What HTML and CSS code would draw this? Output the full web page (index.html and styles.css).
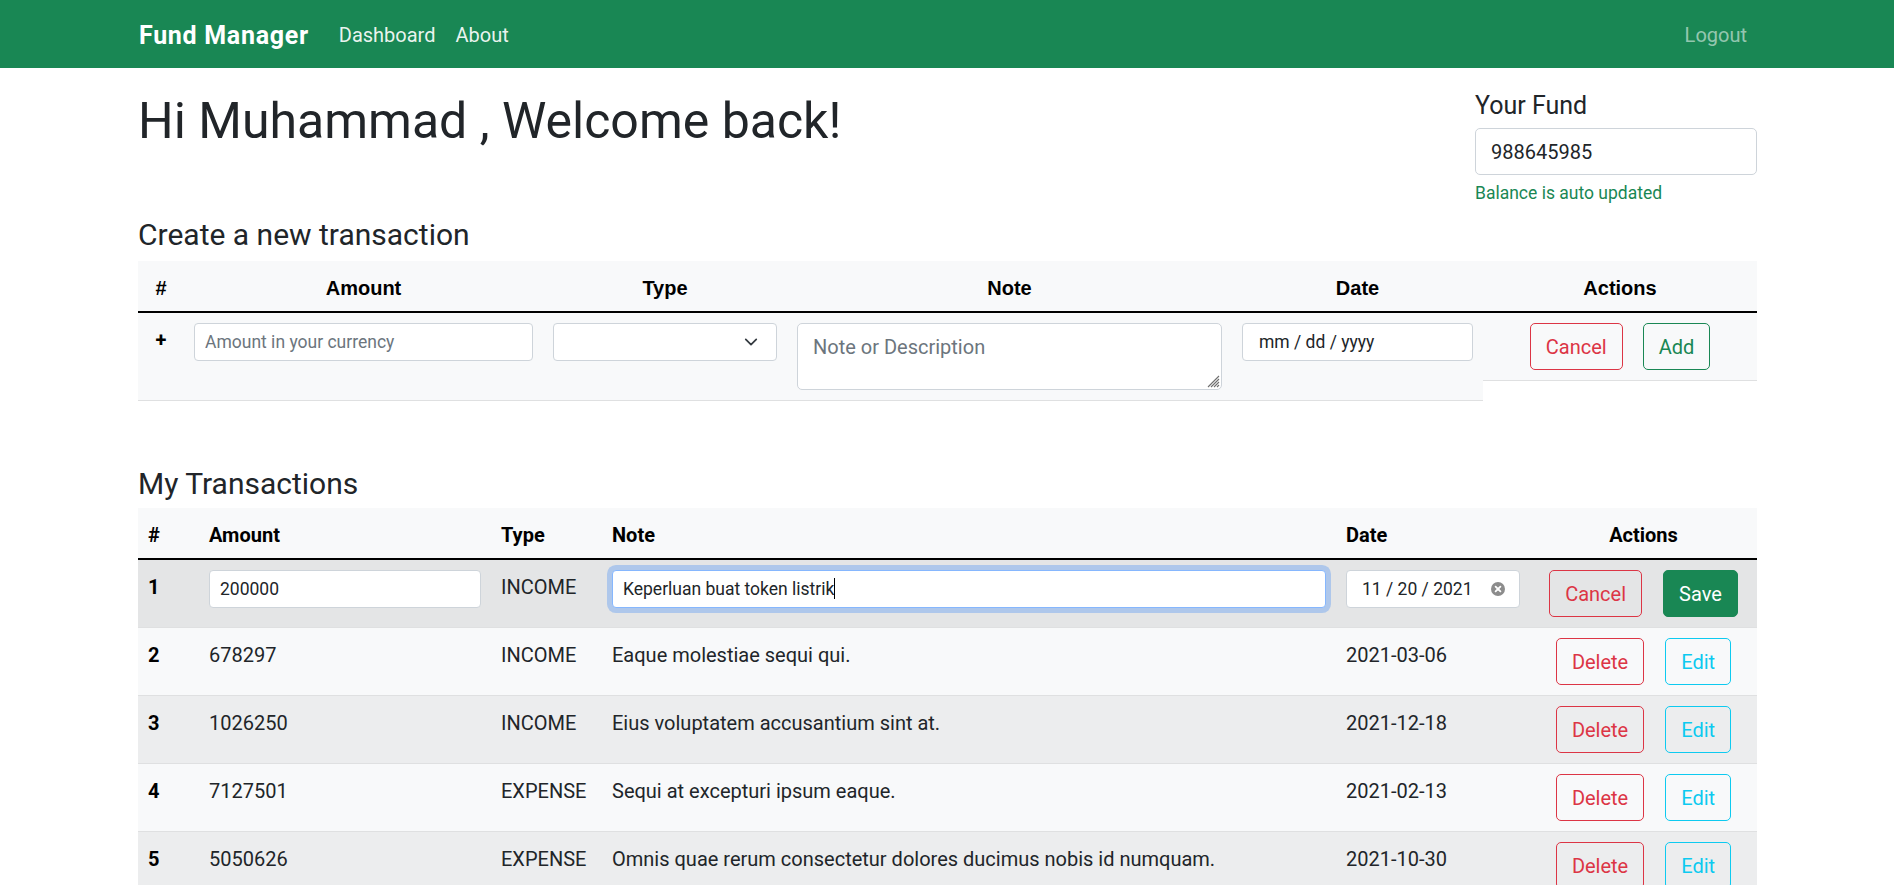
FILE: index.html
```html
<!DOCTYPE html>
<html lang="en">
<head>
<meta charset="utf-8">
<title>Fund Manager</title>
<link rel="stylesheet" href="styles.css">
</head>
<body>
<nav class="navbar">
  <div class="container nav-inner">
    <a class="brand" href="#">Fund Manager</a>
    <ul class="nav-links">
      <li><a class="nav-link" href="#">Dashboard</a></li>
      <li><a class="nav-link" href="#">About</a></li>
    </ul>
    <a class="nav-link logout" href="#">Logout</a>
  </div>
</nav>

<main class="container page">
  <section class="top-row">
    <h1 class="welcome">Hi Muhammad , Welcome back!</h1>
    <div class="fund">
      <label class="fund-label" for="fund">Your Fund</label>
      <input id="fund" class="form-control" type="text" value="988645985">
      <div class="form-text">Balance is auto updated</div>
    </div>
  </section>

  <h4 class="section-title create-title">Create a new transaction</h4>
  <table class="table create-table">
    <colgroup>
      <col class="c1-num"><col class="c1-amount"><col class="c1-type"><col class="c1-note"><col class="c1-date"><col class="c1-actions">
    </colgroup>
    <thead>
      <tr><th>#</th><th>Amount</th><th>Type</th><th>Note</th><th>Date</th><th>Actions</th></tr>
    </thead>
    <tbody>
      <tr>
        <th class="row-head">+</th>
        <td><input class="form-control form-control-sm" type="text" placeholder="Amount in your currency"></td>
        <td>
          <div class="form-control form-control-sm form-select">
            <svg class="chev" viewBox="0 0 16 16" width="18" height="14"><path d="M2 5l6 6 6-6" fill="none" stroke="#343a40" stroke-width="2" stroke-linecap="round" stroke-linejoin="round"/></svg>
          </div>
        </td>
        <td>
          <div class="textarea-wrap">
            <textarea class="form-control note-area" placeholder="Note or Description"></textarea>
            <svg class="grip" viewBox="0 0 14 14" width="14" height="14"><path d="M13 2L2 13M13 5L5 13M13 8L8 13M13 11L11 13" stroke="#6f6f6f" stroke-width="1.1" fill="none"/></svg>
          </div>
        </td>
        <td><input class="form-control form-control-sm date-input" type="text" placeholder="mm / dd / yyyy"></td>
        <td class="actions-cell">
          <div class="actions-box">
            <button class="btn btn-outline-danger">Cancel</button>
            <button class="btn btn-outline-success">Add</button>
          </div>
        </td>
      </tr>
    </tbody>
  </table>

  <h4 class="section-title tx-title">My Transactions</h4>
  <table class="table tx-table">
    <colgroup>
      <col class="c2-num"><col class="c2-amount"><col class="c2-type"><col class="c2-note"><col class="c2-date"><col class="c2-actions">
    </colgroup>
    <thead>
      <tr><th>#</th><th>Amount</th><th>Type</th><th>Note</th><th>Date</th><th class="center">Actions</th></tr>
    </thead>
    <tbody>
      <tr class="active">
        <th class="row-head">1</th>
        <td><input class="form-control form-control-sm" type="text" value="200000"></td>
        <td>INCOME</td>
        <td><div class="form-control form-control-sm focused">Keperluan buat token listrik<span class="caret"></span></div></td>
        <td>
          <div class="form-control form-control-sm date-filled">
            <span>11 / 20 / 2021</span>
            <svg class="clear" viewBox="0 0 16 16" width="16" height="16"><circle cx="8" cy="8" r="7" fill="#8c8c8c"/><path d="M5.6 5.6l4.8 4.8M10.4 5.6l-4.8 4.8" stroke="#fff" stroke-width="1.8" stroke-linecap="round"/></svg>
          </div>
        </td>
        <td><div class="btn-row"><button class="btn btn-outline-danger">Cancel</button><button class="btn btn-success">Save</button></div></td>
      </tr>
      <tr>
        <th class="row-head">2</th>
        <td>678297</td>
        <td>INCOME</td>
        <td>Eaque molestiae sequi qui.</td>
        <td>2021-03-06</td>
        <td><div class="btn-row"><button class="btn btn-outline-danger">Delete</button><button class="btn btn-outline-info">Edit</button></div></td>
      </tr>
      <tr>
        <th class="row-head">3</th>
        <td>1026250</td>
        <td>INCOME</td>
        <td>Eius voluptatem accusantium sint at.</td>
        <td>2021-12-18</td>
        <td><div class="btn-row"><button class="btn btn-outline-danger">Delete</button><button class="btn btn-outline-info">Edit</button></div></td>
      </tr>
      <tr>
        <th class="row-head">4</th>
        <td>7127501</td>
        <td>EXPENSE</td>
        <td>Sequi at excepturi ipsum eaque.</td>
        <td>2021-02-13</td>
        <td><div class="btn-row"><button class="btn btn-outline-danger">Delete</button><button class="btn btn-outline-info">Edit</button></div></td>
      </tr>
      <tr>
        <th class="row-head">5</th>
        <td>5050626</td>
        <td>EXPENSE</td>
        <td>Omnis quae rerum consectetur dolores ducimus nobis id numquam.</td>
        <td>2021-10-30</td>
        <td><div class="btn-row"><button class="btn btn-outline-danger">Delete</button><button class="btn btn-outline-info">Edit</button></div></td>
      </tr>
    </tbody>
  </table>
</main>
</body>
</html>
```

FILE: styles.css
```css
html { font-size: 20px; }
* { box-sizing: border-box; }
body {
  margin: 0;
  font-family: Roboto, "Liberation Sans", Arial, sans-serif;
  font-size: 20px;
  line-height: 30px;
  color: #212529;
  background: #fff;
}

.container { padding: 0 137px 0 138px; }

/* Navbar */
.navbar { background: #198754; height: 68px; }
.nav-inner { display: flex; align-items: center; height: 100%; padding-top: 2px; }
.brand {
  color: #fff;
  font-weight: 700;
  font-size: 25px;
  line-height: 37px;
  text-decoration: none;
  margin-right: 20px;
  padding-left: 1px;
  letter-spacing: 0.7px;
}
.nav-links { display: flex; list-style: none; margin: 0; padding: 0; flex: 1; }
.nav-link {
  display: block;
  padding: 0 10px;
  color: rgba(255, 255, 255, 0.92);
  text-decoration: none;
  font-size: 20px;
  line-height: 30px;
}
.logout { color: rgba(255, 255, 255, 0.55); }

/* Top row */
.top-row { display: flex; justify-content: space-between; align-items: flex-start; padding-top: 19px; }
.welcome { margin: 4px 0 0; font-size: 50px; line-height: 60px; font-weight: 400; }
.fund { width: 282px; padding-top: 4px; }
.fund-label { display: block; font-size: 25px; line-height: 30px; margin-bottom: 7px; }
.form-text { margin-top: 5px; font-size: 17.5px; line-height: 26px; color: #198754; }

.section-title { font-size: 30px; line-height: 36px; font-weight: 400; margin: 11px 0 8px; }
.tx-title { margin-top: 65px; margin-bottom: 6px; }

/* Form controls */
.form-control {
  display: block;
  width: 100%;
  font-family: inherit;
  font-size: 20px;
  line-height: 30px;
  padding: 7.5px 15px;
  color: #212529;
  background: #fff;
  border: 1px solid #ced4da;
  border-radius: 5px;
  outline: none;
}
.form-control::placeholder { color: #6c757d; opacity: 1; }
.form-control-sm { font-size: 17.5px; line-height: 26px; padding: 5px 10px; border-radius: 4px; height: 38px; }
.form-select { display: flex; align-items: center; justify-content: flex-end; padding-right: 16px; }
.chev { display: block; }
.textarea-wrap { position: relative; }
.note-area { height: 67px; resize: none; }
.grip { position: absolute; right: 2px; bottom: 2px; }
.date-input { padding-left: 16px; }
.date-input::placeholder { color: #212529; }
.date-filled { display: flex; align-items: center; justify-content: space-between; padding-left: 15px; padding-right: 13px; }
.clear { display: block; }
.focused { border-color: #86b7fe; box-shadow: 0 0 0 5px rgba(13, 110, 253, 0.25); white-space: nowrap; }
.caret { display: inline-block; width: 1px; height: 21px; background: #000; vertical-align: -4px; }

/* Buttons */
.btn {
  display: inline-block;
  font-family: inherit;
  font-size: 20px;
  line-height: 30px;
  padding: 7.5px 15px;
  border: 1px solid transparent;
  border-radius: 5px;
  background: transparent;
  cursor: pointer;
}
.btn-outline-danger { color: #dc3545; border-color: #dc3545; }
.btn-outline-success { color: #198754; border-color: #198754; }
.btn-outline-info { color: #0dcaf0; border-color: #0dcaf0; }
.btn-success { color: #fff; background: #198754; border-color: #198754; }

/* Tables */
.table { width: 100%; table-layout: fixed; border-collapse: separate; border-spacing: 0; color: #212529; }
.table th, .table td { padding: 10px; vertical-align: top; text-align: left; font-weight: 400; line-height: 34px; }
.table thead th { padding: 10px 10px 6px; background: #f8f9fa; color: #000; font-weight: 700; border-bottom: 2px solid #000; }
.table tbody th, .table tbody td { background: #f8f9fa; border-bottom: 1px solid #dfe0e1; }
.table tbody .row-head { font-weight: 700; color: #000; }
.center { text-align: center; }

.create-table thead th { text-align: center; font-family: "Liberation Sans", Arial, sans-serif; }
.create-table tbody .row-head { text-align: center; }
.c1-num { width: 46px; }
.c1-amount { width: 359px; }
.c1-type { width: 244px; }
.c1-note { width: 445px; }
.c1-date { width: 251px; }
.c1-actions { width: 274px; }
.create-table tbody td.actions-cell { background: none; border: none; padding: 0; }
.actions-box { display: flex; justify-content: center; gap: 20px; padding: 10px; background: #f8f9fa; border-bottom: 1px solid #dfe0e1; }

.c2-num { width: 61px; }
.c2-amount { width: 292px; }
.c2-type { width: 111px; }
.c2-note { width: 734px; }
.c2-date { width: 194px; }
.c2-actions { width: 227px; }
.tx-table thead th.center { text-align: center; }
.tx-table tbody tr:nth-child(odd) th,
.tx-table tbody tr:nth-child(odd) td { background: #ecedee; }
.tx-table tbody tr.active th,
.tx-table tbody tr.active td { background: #e4e5e6; }
.btn-row { display: flex; justify-content: center; gap: 21px; }
```
